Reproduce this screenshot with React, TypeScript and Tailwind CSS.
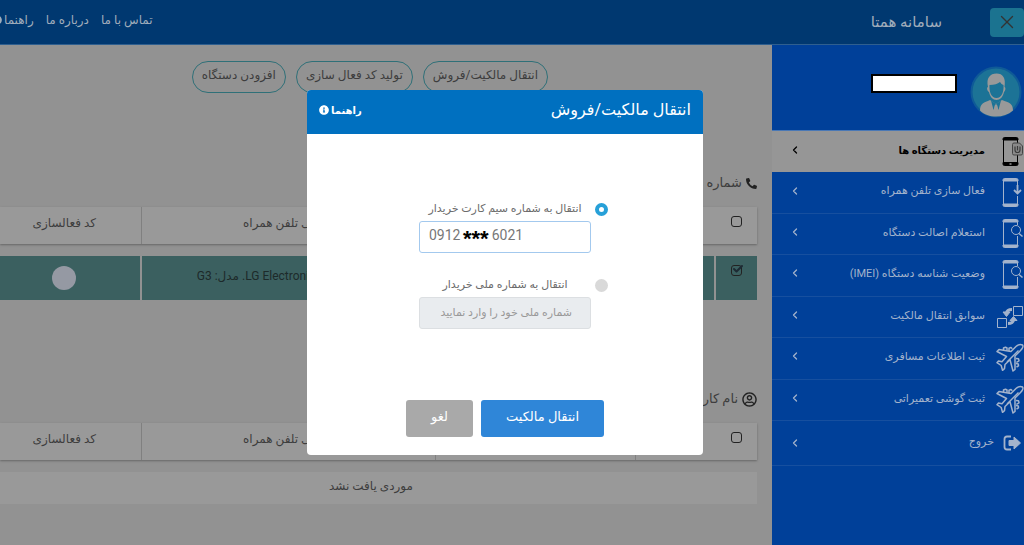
import type { ReactNode } from "react";
import { Check, ChevronLeft, X } from "lucide-react";
import { FaInfoCircle, FaPhoneAlt, FaRegUserCircle } from "react-icons/fa";

function PhoneFrame({ children }: { children: ReactNode }) {
  return (
    <svg viewBox="0 0 22 32" className="h-8 w-[22px]" fill="none" stroke="currentColor">
      {children}
    </svg>
  );
}

function PhoneManageIcon() {
  return (
    <PhoneFrame>
      <path d="M1.5 3v24M15.5 3v4M15.5 19v8" />
      <path d="M1 4V3q0-1.500 1.500-1.500h12q1.500 0 1.500 1.500v1z" fill="currentColor" />
      <path d="M1 26.500h15V28q0 1.500-1.500 1.500h-12Q1 29.500 1 28z" fill="currentColor" />
      <path d="M7.500 28h2" stroke="#969696" strokeWidth="1.500" />
      <path d="M10.500 8.500q0-1.500 1.500-1.500h5.500l3 3v7.500q0 1.500-1.500 1.500h-7q-1.500 0-1.500-1.500z" fill="#8a8a8a" stroke="#444" />
      <path d="M13 10.500V14q0 2.500 2.500 2.500T18 14v-3.500M15.500 10v4.500" stroke="#3a3a3a" strokeWidth="1.200" />
    </PhoneFrame>
  );
}

function PhoneDownloadIcon() {
  return (
    <PhoneFrame>
      <path d="M1.5 3v24M15.5 3v6M15.5 19v8" />
      <path d="M1 4V3q0-1.500 1.500-1.500h12q1.500 0 1.500 1.500v1z" fill="currentColor" />
      <path d="M1 27h15v1q0 1.500-1.500 1.500h-12Q1 29.500 1 28z" fill="currentColor" />
      <path d="M15.500 8v8.500M12 13l3.500 3.500L19 13" strokeWidth="1.800" />
    </PhoneFrame>
  );
}

function PhoneSearchIcon() {
  return (
    <PhoneFrame>
      <path d="M1.5 3v24M15.5 3v4M15.5 18v9" />
      <path d="M1 4V3q0-1.500 1.500-1.500h12q1.500 0 1.500 1.500v1z" fill="currentColor" />
      <path d="M1 27h15v1q0 1.500-1.500 1.500h-12Q1 29.500 1 28z" fill="currentColor" />
      <circle cx="14" cy="12" r="4.500" />
      <path d="M17 15.500l3.500 3" strokeWidth="1.500" />
    </PhoneFrame>
  );
}

function TransferIcon() {
  return (
    <svg viewBox="0 0 28 24" className="h-6 w-7" fill="none" stroke="currentColor">
      <path d="M17.500 1.500h9v9h-9zM1.500 13.500h9v9h-9z" />
      <path d="M16 4.500q-5 0-5.500 3.500" strokeWidth="3" />
      <path d="M7 7h7l-3.500 4.500z" fill="currentColor" />
      <path d="M12 18.500q5 0 5.500-3.500" strokeWidth="3" />
      <path d="M14 15.500h7L17.500 11.500z" fill="currentColor" />
    </svg>
  );
}

function PlaneIcon() {
  return (
    <svg
      viewBox="0 0 28 30"
      className="h-[30px] w-7"
      fill="none"
      stroke="currentColor"
      strokeWidth="1.500"
      strokeLinejoin="round"
    >
      <path d="M26.500 2c-2-1-4.500-.5-6.500 1.500l-5 5L3 6.500 1 8.500l9.500 5-4.500 5.300L2.500 18 1 19.700l4.200 2.800 1.300 4.800 2-1.600.5-4.200 5-4.800 3 11.300 2-1.500v-13.500l5.500-5.500c2-2 3-4.500 2-5.500z" />
      <path d="M7.500 7V5l2-.8L11 5v2.500M13 8V5.300l2-.8 1.300 1.200M20 15.500l2.500.3.500 2-2.500 1.500M20 20.500l2.300.4.200 2-2 1.100" />
      <path d="M11 19L22.500 7.500" />
    </svg>
  );
}

function ExitIcon() {
  return (
    <svg viewBox="0 0 19 16" className="h-4 w-[19px]" fill="none" stroke="currentColor">
      <path d="M8 1.500H4Q1.500 1.500 1.500 4v8q0 2.500 2.500 2.500h4" strokeWidth="1.800" />
      <path d="M6 5.500h5V2l6.500 6-6.500 6v-3.500H6z" fill="currentColor" />
    </svg>
  );
}

function Avatar() {
  return (
    <svg viewBox="0 0 52 52" className="size-[52px]">
      <circle cx="26" cy="26" r="25.500" fill="#0f5a97" />
      <circle cx="26" cy="26" r="23.500" fill="#1c7396" />
      <path d="M10 44.500c0-7 4-8 10-10.500l6 4 6-4c7 2.500 11 3.500 11 10.500-9 8-25 8-33 0z" fill="#999" />
      <path d="M18 21c-2-9 2-13.500 8.500-13.500S36 12 34.500 21c1.500 0 1 4-.5 5-1 5-4 8-7.500 8S20 31 19 26c-2-1-2.500-5-1-5z" fill="#999" />
      <path d="M19.500 19c5 0 8-1 10.500-3 1 1.500 2 2.500 3.500 3 .5 7-2 13-7 13s-7.500-6-7-13z" fill="#1c7396" />
      <path d="M21 34.500l5 3.500 5-3.500-2.500 9.500-1.500-5h-2l-1.500 5z" fill="#1c7396" />
      <path d="M25 38.500h2l1 7h-4z" fill="#999" />
    </svg>
  );
}

const menuItems = [
  { label: "مدیریت دستگاه ها", icon: <PhoneManageIcon />, active: true },
  { label: "فعال سازی تلفن همراه", icon: <PhoneDownloadIcon /> },
  { label: "استعلام اصالت دستگاه", icon: <PhoneSearchIcon /> },
  { label: "وضعیت شناسه دستگاه (IMEI)", icon: <PhoneSearchIcon /> },
  { label: "سوابق انتقال مالکیت", icon: <TransferIcon /> },
  { label: "ثبت اطلاعات مسافری", icon: <PlaneIcon /> },
  { label: "ثبت گوشی تعمیراتی", icon: <PlaneIcon /> },
];

const actions = ["انتقال مالکیت/فروش", "تولید کد فعال سازی", "افزودن دستگاه"];

function Sidebar() {
  return (
    <aside className="w-[252px] shrink-0 bg-[#004099] text-[#a3b3cc]">
      <div className="flex h-[86px] items-center justify-between border-b border-[#4a78b5] pt-2 pr-[2px] pl-[99px]">
        <Avatar />
        <div className="mb-4 h-[19px] w-[86px] border-2 border-black bg-white" />
      </div>
      <nav className="text-[11px]">
        <div className="grid h-[290px] grid-rows-7">
          {menuItems.map((item) => (
            <a
              key={item.label}
              href="#"
              className={
                item.active
                  ? "flex items-center bg-[#969696] pl-[17px] text-[10px] font-bold text-black"
                  : "flex items-center border-b border-[#164f9f] pl-[17px]"
              }
            >
              <span className="flex w-7 justify-start">{item.icon}</span>
              <span className="mr-[11px] grow pb-[2px]">{item.label}</span>
              <ChevronLeft size={12} strokeWidth={2.5} className="mb-1" />
            </a>
          ))}
        </div>
        <a href="#" className="flex h-[45px] items-center border-b border-[#164f9f] pr-[2px] pl-[17px]">
          <ExitIcon />
          <span className="mr-[9px] grow pb-[2px]">خروج</span>
          <ChevronLeft size={12} strokeWidth={2.5} />
        </a>
      </nav>
    </aside>
  );
}

type BoxProps = { label: string; checked?: boolean };

function Box({ label, checked }: BoxProps) {
  return (
    <div className="relative mx-auto mb-2 size-[11px] text-[#1d2a33]">
      <input
        type="checkbox"
        defaultChecked={checked}
        aria-label={label}
        className="block size-[11px] appearance-none rounded-[3px] border border-[#222]"
      />
      {checked && <Check size={12} strokeWidth={4} className="absolute -top-[2px] left-px" />}
    </div>
  );
}

function TableHead() {
  return (
    <>
      <colgroup>
        <col className="w-[42px]" />
        <col className="w-20" />
        <col className="w-[200px]" />
        <col />
        <col className="w-[141px]" />
      </colgroup>
      <thead className="bg-[#999] shadow-[0_1px_2px_#666]">
        <tr className="h-[37px]">
          <th>
            <Box label="انتخاب همه" />
          </th>
          <th />
          <th className="border-r border-[#808080] pb-[6px] font-normal">شماره تلفن همراه</th>
          <th className="border-r border-[#808080] pb-[6px] font-normal">گوشی تلفن همراه</th>
          <th className="border-r border-[#808080] pr-3 pb-[6px] font-normal">کد فعالسازی</th>
        </tr>
      </thead>
    </>
  );
}

function Devices() {
  return (
    <main className="min-w-0 grow bg-[#929292] pr-[15px] text-xs text-[#3d3d3d]">
      <div className="mt-4 mr-[209px] flex gap-[10px]">
        {actions.map((label) => (
          <button key={label} className="h-8 rounded-full border border-[#2f7078] px-[9px] pb-1 whitespace-nowrap">
            {label}
          </button>
        ))}
      </div>

      <h2 className="mt-[78px] flex h-6 items-center gap-1 text-[13px]">
        <FaPhoneAlt size={11} className="text-[#222]" />
        شماره همراه
      </h2>
      <table className="mt-3 w-full table-fixed border-collapse">
        <TableHead />
        <tbody>
          <tr className="h-3">
            <td colSpan={5} />
          </tr>
          <tr className="h-11 bg-[#3b6060] text-[#1d2a2a]">
            <td className="pb-2">
              <Box label="LG G3" checked />
            </td>
            <td className="border-r-2 border-[#929292]" />
            <td />
            <td className="pb-1 text-center whitespace-nowrap">نام سازنده: LG Electronics. مدل: G3</td>
            <td className="border-r-2 border-[#929292] pr-3">
              <div className="mx-auto size-6 rounded-full bg-[#9599a3]" />
            </td>
          </tr>
        </tbody>
      </table>

      <h2 className="mt-[87px] flex h-6 items-center gap-1 text-[13px]">
        <FaRegUserCircle size={15} className="text-[#222]" />
        نام کاربری
      </h2>
      <table className="mt-3 w-full table-fixed border-collapse">
        <TableHead />
        <tbody>
          <tr className="h-3">
            <td colSpan={5} />
          </tr>
          <tr className="h-8 bg-[#999]">
            <td colSpan={5} className="pr-[15px] pb-1 text-center">
              موردی یافت نشد
            </td>
          </tr>
        </tbody>
      </table>
    </main>
  );
}

function TransferDialog() {
  return (
    <div className="fixed inset-0 flex items-center justify-center pr-[14px]">
      <div role="dialog" aria-labelledby="dialog-title" className="w-[396px] overflow-hidden rounded bg-white">
        <div className="flex h-11 items-center justify-between bg-[#0070c0] px-3 pb-1 text-white">
          <h1 id="dialog-title" className="text-base">
            انتقال مالکیت/فروش
          </h1>
          <a href="#" className="flex items-center gap-[2px] text-[10px] font-bold">
            راهنما
            <FaInfoCircle size={10} />
          </a>
        </div>
        <form className="pt-[63px] pb-[18px] text-[11px] text-[#6b6b6b]">
          <div className="mr-[95px] grid grid-cols-[13px_172px] grid-rows-[24px_32px_44px_32px] gap-x-1">
            <input
              id="by-phone"
              type="radio"
              name="target"
              defaultChecked
              className="size-[13px] appearance-none self-center rounded-full border-4 border-[#27a0d8] bg-white"
            />
            <label htmlFor="by-phone" className="self-center text-center">
              انتقال به شماره سیم کارت خریدار
            </label>
            <div dir="ltr" className="relative col-start-2">
              <input
                type="text"
                aria-label="شماره سیم کارت خریدار"
                defaultValue="0912         6021"
                className="h-8 w-full rounded-[3px] border border-[#a3c9ee] px-[9px] pb-1 text-sm text-[#777]"
              />
              <span className="pointer-events-none absolute top-[2px] left-11 font-['Liberation_Sans',sans-serif] text-[22px] leading-8 font-bold text-black">
                ***
              </span>
            </div>
            <input
              id="by-national-id"
              type="radio"
              name="target"
              className="mt-5 size-[13px] appearance-none self-center rounded-full bg-[#d9d9d9]"
            />
            <label htmlFor="by-national-id" className="mt-5 self-center text-center">
              انتقال به شماره ملی خریدار
            </label>
            <input
              type="text"
              disabled
              aria-label="شماره ملی خریدار"
              placeholder="شماره ملی خود را وارد نمایید"
              className="col-start-2 h-8 rounded-[3px] border border-[#dcdfe2] bg-[#e9ecef] px-[18px] pb-[2px] placeholder:text-[#999]"
            />
          </div>
          <div className="mt-[71px] flex justify-center gap-2 text-[13px] text-white">
            <button type="submit" className="h-[37px] w-[123px] rounded-[3px] bg-[#2f86d8] pb-1">
              انتقال مالکیت
            </button>
            <button type="button" className="h-[37px] w-[67px] rounded-[3px] bg-[#a9a9a9] pb-1">
              لغو
            </button>
          </div>
        </form>
      </div>
    </div>
  );
}

export default function App() {
  return (
    <div
      dir="rtl"
      className="flex min-h-screen flex-col overflow-hidden bg-[#929292] font-['Roboto','DejaVu_Sans',sans-serif]"
    >
      <header className="flex h-[45px] items-center border-b border-[#2f5f8f] bg-[#003870] text-[#a0adbb]">
        <button aria-label="بستن" className="flex h-[29px] w-[34px] items-center justify-center rounded bg-[#1b7390] text-[#333]">
          <X size={22} strokeWidth={1.5} />
        </button>
        <span className="mr-12 grow text-[15px]">سامانه همتا</span>
        <nav className="-ml-2 flex gap-3 pb-1 text-xs">
          <a href="#">تماس با ما</a>
          <a href="#">درباره ما</a>
          <a href="#" className="flex items-center gap-[2px]">
            راهنما
            <FaInfoCircle size={10} />
          </a>
        </nav>
      </header>
      <div className="flex grow">
        <Sidebar />
        <Devices />
      </div>
      <TransferDialog />
    </div>
  );
}
